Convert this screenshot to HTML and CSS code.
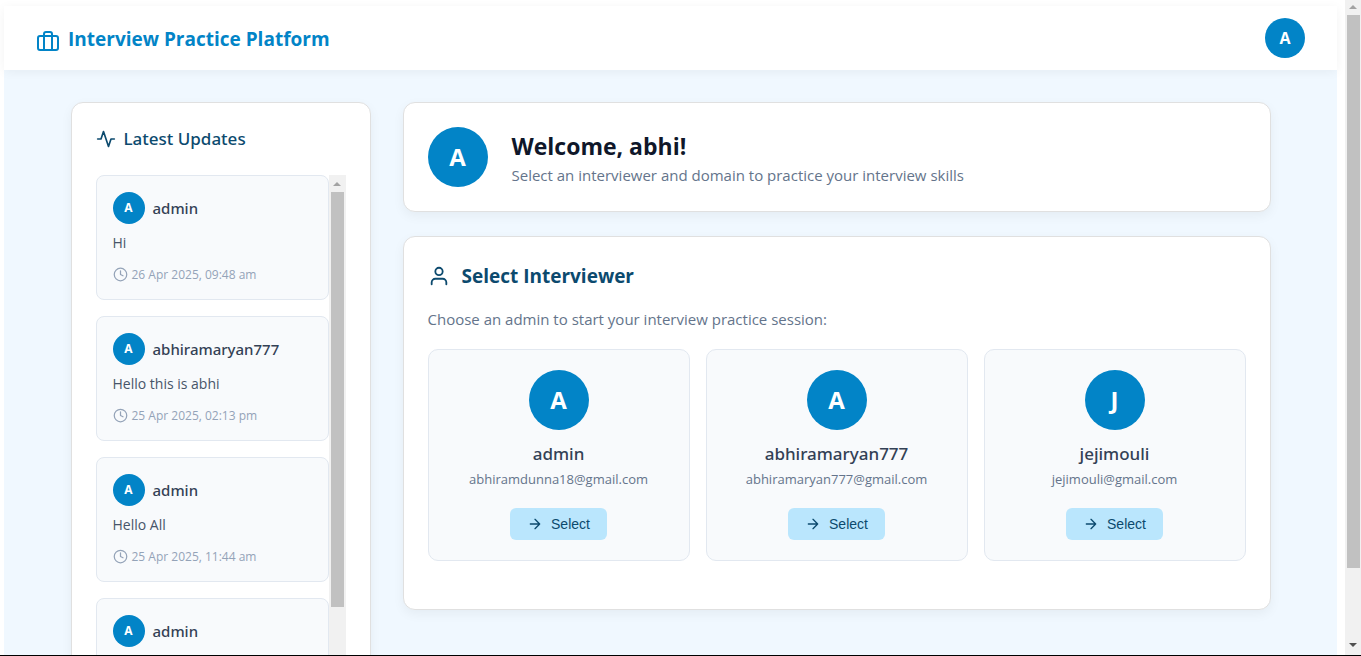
FILE: index.html
```html
<!DOCTYPE html>
<html lang="en">
<head>
<meta charset="utf-8">
<title>Interview Practice Platform</title>
<link rel="stylesheet" href="styles.css">
</head>
<body>
<svg class="sprite" aria-hidden="true">
  <symbol id="clock" viewBox="0 0 24 24"><circle cx="12" cy="12" r="10"/><path d="M12 6v6l4 2"/></symbol>
  <symbol id="arrow" viewBox="0 0 24 24"><path d="M5 12h14M12 5l7 7-7 7"/></symbol>
  <symbol id="up" viewBox="0 0 8 4"><path d="M0 4L4 0L8 4Z"/></symbol>
  <symbol id="down" viewBox="0 0 8 4"><path d="M0 0L4 4L8 0Z"/></symbol>
</svg>
<div class="window">
  <div class="viewport">
    <div class="app">
      <header class="header">
        <a class="brand" href="#">
          <svg class="icon icon-brand" viewBox="0 0 24 24"><rect x="2" y="7" width="20" height="14" rx="2"/><path d="M16 21V5a2 2 0 0 0-2-2h-4a2 2 0 0 0-2 2v16"/></svg>
          <span>Interview Practice Platform</span>
        </a>
        <button class="avatar avatar-md" type="button" aria-label="Account">A</button>
      </header>
      <div class="content">
        <aside class="card updates">
          <h2 class="updates-title">
            <svg class="icon icon-md" viewBox="0 0 24 24"><path d="M22 12h-4l-3 9L9 3l-3 9H2"/></svg>
            <span>Latest Updates</span>
          </h2>
          <div class="feed">
            <ul class="feed-list">
              <li class="update">
                <div class="author"><span class="avatar avatar-sm">A</span><span>admin</span></div>
                <p class="message">Hi</p>
                <p class="time"><svg class="icon icon-sm"><use href="#clock"/></svg><span>26 Apr 2025, 09:48 am</span></p>
              </li>
              <li class="update">
                <div class="author"><span class="avatar avatar-sm">A</span><span>abhiramaryan777</span></div>
                <p class="message">Hello this is abhi</p>
                <p class="time"><svg class="icon icon-sm"><use href="#clock"/></svg><span>25 Apr 2025, 02:13 pm</span></p>
              </li>
              <li class="update">
                <div class="author"><span class="avatar avatar-sm">A</span><span>admin</span></div>
                <p class="message">Hello All</p>
                <p class="time"><svg class="icon icon-sm"><use href="#clock"/></svg><span>25 Apr 2025, 11:44 am</span></p>
              </li>
              <li class="update">
                <div class="author"><span class="avatar avatar-sm">A</span><span>admin</span></div>
              </li>
            </ul>
            <div class="scrollbar feed-scrollbar">
              <svg class="scroll-arrow"><use href="#up"/></svg>
              <div class="scroll-thumb"></div>
            </div>
          </div>
        </aside>
        <main class="main">
          <section class="card welcome">
            <span class="avatar avatar-lg">A</span>
            <div class="welcome-text">
              <h1 class="welcome-title">Welcome, abhi!</h1>
              <p class="lead">Select an interviewer and domain to practice your interview skills</p>
            </div>
          </section>
          <section class="card picker">
            <h2 class="picker-title">
              <svg class="icon icon-user" viewBox="0 0 24 24"><path d="M20 21v-2a4 4 0 0 0-4-4H8a4 4 0 0 0-4 4v2"/><circle cx="12" cy="7" r="4"/></svg>
              <span>Select Interviewer</span>
            </h2>
            <p class="lead">Choose an admin to start your interview practice session:</p>
            <div class="people">
              <article class="person">
                <span class="avatar avatar-lg">A</span>
                <h3 class="person-name">admin</h3>
                <p class="email">abhiramdunna18@gmail.com</p>
                <button class="select" type="button"><svg class="icon icon-arrow"><use href="#arrow"/></svg><span>Select</span></button>
              </article>
              <article class="person">
                <span class="avatar avatar-lg">A</span>
                <h3 class="person-name">abhiramaryan777</h3>
                <p class="email">abhiramaryan777@gmail.com</p>
                <button class="select" type="button"><svg class="icon icon-arrow"><use href="#arrow"/></svg><span>Select</span></button>
              </article>
              <article class="person">
                <span class="avatar avatar-lg">J</span>
                <h3 class="person-name">jejimouli</h3>
                <p class="email">jejimouli@gmail.com</p>
                <button class="select" type="button"><svg class="icon icon-arrow"><use href="#arrow"/></svg><span>Select</span></button>
              </article>
            </div>
          </section>
        </main>
      </div>
    </div>
  </div>
  <div class="scrollbar page-scrollbar">
    <svg class="scroll-arrow"><use href="#up"/></svg>
    <div class="scroll-thumb"></div>
    <svg class="scroll-arrow scroll-arrow-down"><use href="#down"/></svg>
  </div>
</div>
</body>
</html>
```
FILE: styles.css
```css
* {
  box-sizing: border-box;
  margin: 0;
  padding: 0;
}

body {
  background: #fff;
  color: #334155;
  font-family: "Segoe UI", "Open Sans", "Noto Sans", sans-serif;
  font-size: 15px;
  line-height: 24px;
  overflow: hidden;
}

.sprite {
  display: none;
}

.window {
  display: flex;
  height: 100vh;
  border-bottom: 1px solid #000;
}

.viewport {
  flex: 1;
  min-width: 0;
  padding: 6px 8px 0 4px;
  overflow: hidden;
}

.app {
  min-height: 100vh;
  background: #f0f8ff;
}

.header {
  display: flex;
  align-items: center;
  justify-content: space-between;
  height: 64px;
  padding: 0 32px;
  background: #fff;
  box-shadow: 0 2px 10px rgba(0, 0, 0, 0.05);
}

.brand {
  display: flex;
  align-items: flex-end;
  gap: 8px;
  padding-top: 2px;
  color: #0284c7;
  font-size: 19px;
  font-weight: 700;
  line-height: 28px;
  text-decoration: none;
}

.icon {
  flex: none;
  fill: none;
  stroke: currentColor;
  stroke-width: 2;
  stroke-linecap: round;
  stroke-linejoin: round;
}

.icon-brand {
  width: 24px;
  height: 24px;
}

.icon-user {
  width: 22px;
  height: 22px;
}

.icon-md {
  width: 20px;
  height: 20px;
}

.icon-arrow {
  width: 16px;
  height: 16px;
}

.icon-sm {
  width: 15px;
  height: 15px;
}

.avatar {
  display: flex;
  flex: none;
  align-items: center;
  justify-content: center;
  border: 0;
  border-radius: 50%;
  background: #0284c7;
  color: #fff;
  font-family: inherit;
  font-weight: 700;
}

.avatar-sm {
  width: 32px;
  height: 32px;
  font-size: 12px;
}

.avatar-md {
  width: 40px;
  height: 40px;
  font-size: 16px;
}

.avatar-lg {
  width: 60px;
  height: 60px;
  font-size: 24px;
}

.content {
  display: grid;
  grid-template-columns: 300px 1fr;
  gap: 32px;
  max-width: 1200px;
  margin: 0 auto;
  padding-top: 32px;
}

.card {
  padding: 24px;
  border: 1px solid #e0e0e0;
  border-radius: 12px;
  background: #fff;
  box-shadow: 0 4px 12px rgba(0, 0, 0, 0.05);
}

.updates-title {
  display: flex;
  align-items: center;
  gap: 8px;
  margin-bottom: 24px;
  color: #0c4a6e;
  font-family: "Segoe UI", "Noto Sans", sans-serif;
  font-size: 17px;
  font-weight: 500;
  line-height: 24px;
}

.feed {
  display: flex;
  padding-bottom: 24px;
}

.feed-list {
  flex: 1;
  list-style: none;
}

.update {
  min-height: 125px;
  margin-bottom: 16px;
  padding: 16px;
  border: 1px solid #e2e8f0;
  border-radius: 8px;
  background: #f8fafc;
}

.author {
  display: flex;
  align-items: center;
  gap: 8px;
  font-family: "Segoe UI", "Noto Sans", sans-serif;
  font-weight: 500;
}

.message {
  margin-top: 8px;
  color: #475569;
  font-size: 14px;
  line-height: 22px;
}

.time {
  display: flex;
  align-items: center;
  gap: 4px;
  margin-top: 12px;
  color: #94a3b8;
  font-size: 12px;
  line-height: 17px;
}

.scrollbar {
  display: flex;
  flex: none;
  flex-direction: column;
  align-items: center;
  background: #f1f1f1;
}

.scroll-arrow {
  flex: none;
  width: 8px;
  height: 4px;
  fill: #a3a3a3;
}

.scroll-arrow-down {
  margin-top: auto;
  margin-bottom: 8px;
  fill: #505050;
}

.scroll-thumb {
  width: 13px;
  background: #c1c1c1;
}

.feed-scrollbar {
  width: 17px;
  padding-top: 7px;
}

.feed-scrollbar .scroll-thumb {
  height: 415px;
  margin-top: 6px;
}

.page-scrollbar {
  width: 16px;
  padding-top: 5px;
}

.page-scrollbar .scroll-thumb {
  height: 85%;
  margin-top: 6px;
}

.main {
  display: flex;
  flex-direction: column;
  align-items: stretch;
  gap: 24px;
}

.welcome {
  display: flex;
  align-items: center;
  gap: 24px;
}

.welcome-text {
  padding-top: 2px;
}

.welcome-title {
  color: #0f172a;
  font-size: 23px;
  line-height: 34px;
}

.lead {
  color: #64748b;
}

.picker {
  padding-bottom: 48px;
}

.picker-title {
  display: flex;
  align-items: center;
  gap: 12px;
  margin-bottom: 16px;
  color: #0c4a6e;
  font-size: 19px;
  font-weight: 700;
  line-height: 30px;
}

.people {
  display: grid;
  grid-template-columns: repeat(3, 1fr);
  gap: 16px;
  margin-top: 18px;
}

.person {
  display: flex;
  flex-direction: column;
  align-items: center;
  padding: 20px;
  border: 1px solid #e2e8f0;
  border-radius: 10px;
  background: #f8fafc;
}

.person-name {
  margin-top: 12px;
  font-family: "Segoe UI", "Noto Sans", sans-serif;
  font-size: 17px;
  font-weight: 500;
}

.email {
  color: #64748b;
  font-size: 13px;
  line-height: 26px;
}

.select {
  display: flex;
  align-items: center;
  gap: 8px;
  height: 32px;
  margin-top: 16px;
  padding: 0 17px;
  border: 0;
  border-radius: 6px;
  background: #bae6fd;
  color: #0c4a6e;
  font-family: "Liberation Sans", Arial, sans-serif;
  font-size: 14px;
}
```
